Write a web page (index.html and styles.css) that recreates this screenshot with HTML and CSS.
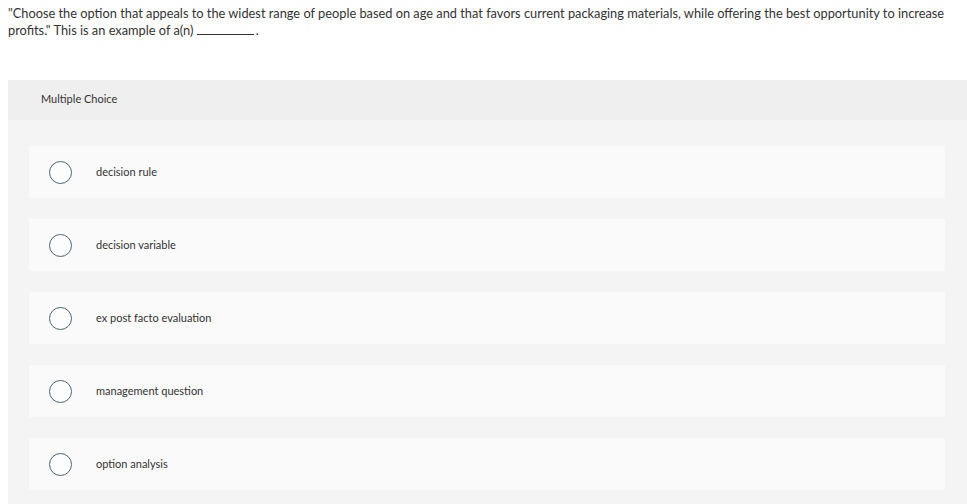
FILE: index.html
```html
<!DOCTYPE html>
<html>
<head>
<meta charset="utf-8">
<link rel="stylesheet" href="styles.css">
</head>
<body>
<div class="question">"Choose the option that appeals to the widest range of people based on age and that favors current packaging materials, while offering the best opportunity to increase profits." This is an example of a(n) <span class="blank"></span>.</div>
<div class="panel">
  <div class="panel-head">Multiple Choice</div>
  <div class="options">
    <div class="option"><span class="radio"></span><span class="label">decision rule</span></div>
    <div class="option"><span class="radio"></span><span class="label">decision variable</span></div>
    <div class="option"><span class="radio"></span><span class="label">ex post facto evaluation</span></div>
    <div class="option"><span class="radio"></span><span class="label">management question</span></div>
    <div class="option"><span class="radio"></span><span class="label">option analysis</span></div>
  </div>
</div>
</body>
</html>
```
FILE: styles.css
```css
html, body {
  margin: 0;
  padding: 0;
  background: #ffffff;
}
body {
  padding: 5px 0 0 8px;
  font-family: "Lato", "Liberation Sans", sans-serif;
  color: #333333;
}
.question {
  font-size: 12.8px;
  line-height: 17px;
  width: 950px;
}
.blank {
  display: inline-block;
  width: 57px;
  height: 0;
  margin-right: 2px;
  border-bottom: 1px solid #333;
  vertical-align: baseline;
}
.panel {
  margin-top: 41px;
  background: #f4f4f4;
  height: 424px;
}
.panel-head {
  background: #efefef;
  height: 40px;
  box-sizing: border-box;
  padding: 0 0 3px 33px;
  display: flex;
  align-items: center;
  font-size: 11px;
  color: #333;
}
.options {
  display: flex;
  flex-direction: column;
  gap: 21px;
  padding: 26px 22px 0 21px;
}
.option {
  background: #fafafa;
  height: 52px;
  display: flex;
  align-items: center;
  padding-left: 20px;
}
.radio {
  width: 21px;
  height: 21px;
  border: 1px solid #4b6475;
  border-radius: 50%;
  background: #fdfdfd;
  flex: none;
}
.label {
  margin-left: 24px;
  padding-bottom: 2px;
  font-size: 11px;
  color: #333;
}
```
